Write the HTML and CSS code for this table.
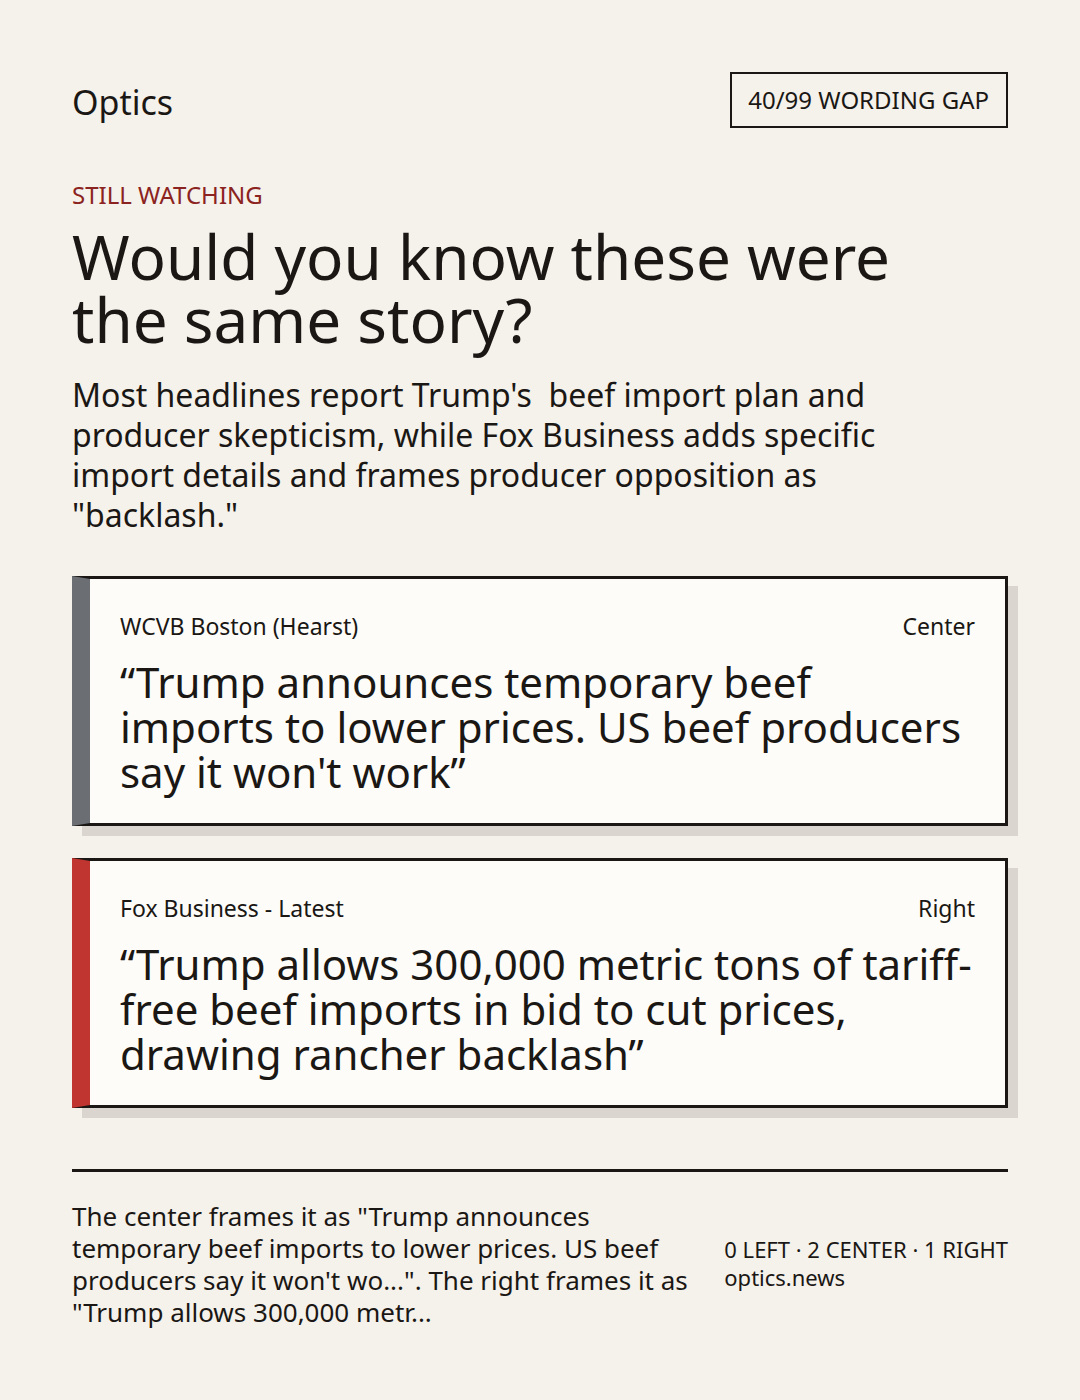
FILE: index.html
```html
<!DOCTYPE html>
<html lang="en">
<head>
<meta charset="utf-8">
<title>Optics</title>
<link rel="stylesheet" href="styles.css">
</head>
<body>
<main class="page">
  <header class="top">
    <div class="brand">Optics</div>
    <div class="badge">40/99 WORDING GAP</div>
  </header>
  <div class="kicker">STILL WATCHING</div>
  <h1 class="title">Would you know these were the same story?</h1>
  <p class="dek">Most headlines report Trump's&nbsp; beef import plan and producer skepticism, while Fox Business adds specific import details and frames producer opposition as "backlash."</p>
  <section class="cards">
    <article class="card card-center">
      <div class="card-meta"><span>WCVB Boston (Hearst)</span><span>Center</span></div>
      <div class="card-quote">“Trump announces temporary beef imports to lower prices. US beef producers say it won't work”</div>
    </article>
    <article class="card card-right">
      <div class="card-meta"><span>Fox Business - Latest</span><span>Right</span></div>
      <div class="card-quote">“Trump allows 300,000 metric tons of tariff-free beef imports in bid to cut prices, drawing rancher backlash”</div>
    </article>
  </section>
  <footer class="foot">
    <p class="summary">The center frames it as "Trump announces temporary beef imports to lower prices. US beef producers say it won't wo...". The right frames it as "Trump allows 300,000 metr...</p>
    <div class="counts">
      <div>0 LEFT · 2 CENTER · 1 RIGHT</div>
      <div>optics.news</div>
    </div>
  </footer>
</main>
</body>
</html>
```

FILE: styles.css
```css
html, body {
  margin: 0;
  padding: 0;
  background: #f5f1eb;
}
body {
  font-family: "Noto Sans", "Open Sans", sans-serif;
  color: #1a1714;
}
.page {
  width: 1080px;
  box-sizing: border-box;
  padding: 72px 72px 60px;
}
.top {
  display: flex;
  justify-content: space-between;
  align-items: center;
}
.brand {
  font-size: 34px;
  line-height: 44px;
  padding-top: 4px;
}
.badge {
  border: 2px solid #1a1714;
  font-size: 24px;
  line-height: 30px;
  padding: 11px 17px 11px 16px;
}
.kicker {
  margin-top: 52px;
  color: #8b2320;
  font-size: 24px;
  line-height: 30px;
}
.title {
  margin: 15px 0 0;
  font-weight: 400;
  font-size: 62px;
  line-height: 63px;
  max-width: 900px;
}
.dek {
  margin: 24px 0 0;
  font-size: 32px;
  line-height: 40px;
  max-width: 860px;
}
.cards {
  margin-top: 41px;
  display: flex;
  flex-direction: column;
  gap: 32px;
}
.card {
  background: #fdfcf8;
  border: 3px solid #1a1714;
  border-left: 18px solid #6b6e73;
  box-shadow: 10px 10px 0 #dad6cf;
  padding: 32px 30px 29px;
}
.card-right {
  border-left-color: #c0352f;
}
.card-meta {
  display: flex;
  justify-content: space-between;
  font-size: 23px;
  line-height: 30px;
}
.card-quote {
  margin-top: 18px;
  font-size: 42px;
  line-height: 45px;
}
.foot {
  margin-top: 61px;
  border-top: 3px solid #1a1714;
  padding-top: 28px;
  display: flex;
  align-items: center;
  gap: 32px;
}
.summary {
  flex: 1;
  margin: 0;
  font-size: 26px;
  line-height: 32px;
}
.counts {
  font-size: 22px;
  line-height: 28px;
  white-space: nowrap;
  padding-bottom: 2px;
}
```
